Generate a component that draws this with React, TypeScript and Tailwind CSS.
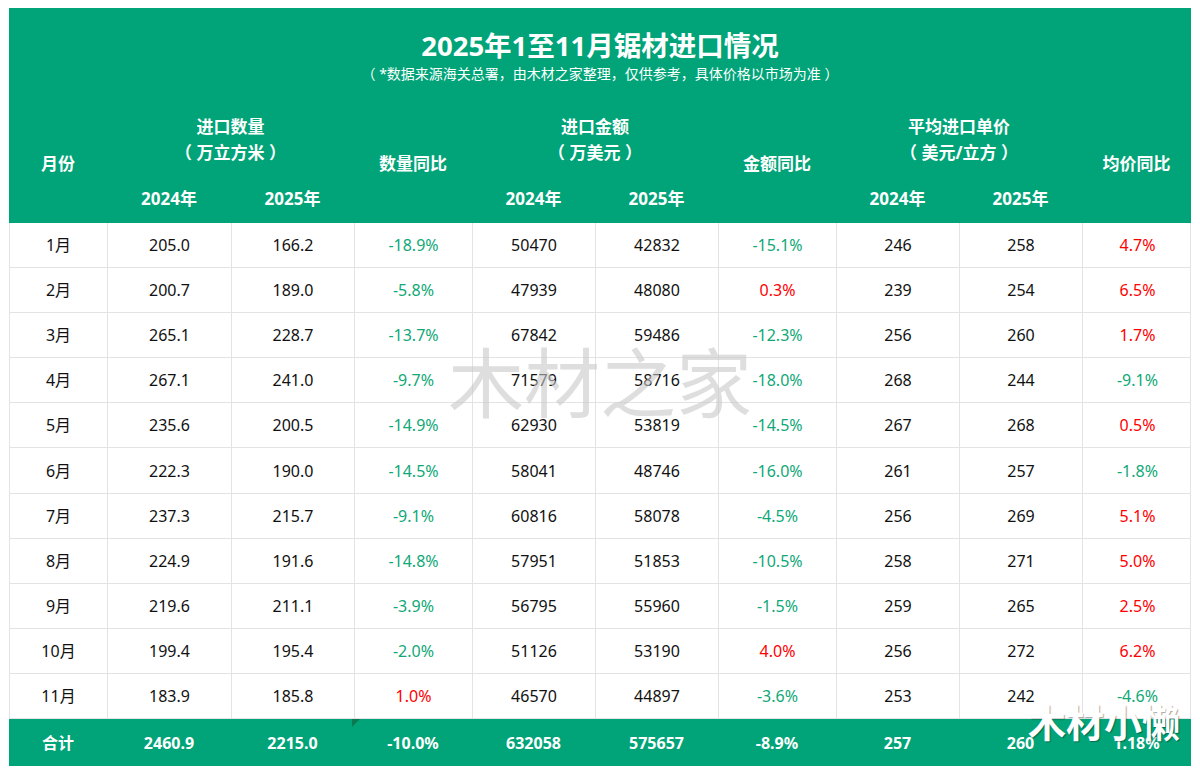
import React from 'react';

type Row = [string, string, string, string, string, string, string, string, string, string];

const rows: Row[] = [
  ['1月', '205.0', '166.2', '-18.9%', '50470', '42832', '-15.1%', '246', '258', '4.7%'],
  ['2月', '200.7', '189.0', '-5.8%', '47939', '48080', '0.3%', '239', '254', '6.5%'],
  ['3月', '265.1', '228.7', '-13.7%', '67842', '59486', '-12.3%', '256', '260', '1.7%'],
  ['4月', '267.1', '241.0', '-9.7%', '71579', '58716', '-18.0%', '268', '244', '-9.1%'],
  ['5月', '235.6', '200.5', '-14.9%', '62930', '53819', '-14.5%', '267', '268', '0.5%'],
  ['6月', '222.3', '190.0', '-14.5%', '58041', '48746', '-16.0%', '261', '257', '-1.8%'],
  ['7月', '237.3', '215.7', '-9.1%', '60816', '58078', '-4.5%', '256', '269', '5.1%'],
  ['8月', '224.9', '191.6', '-14.8%', '57951', '51853', '-10.5%', '258', '271', '5.0%'],
  ['9月', '219.6', '211.1', '-3.9%', '56795', '55960', '-1.5%', '259', '265', '2.5%'],
  ['10月', '199.4', '195.4', '-2.0%', '51126', '53190', '4.0%', '256', '272', '6.2%'],
  ['11月', '183.9', '185.8', '1.0%', '46570', '44897', '-3.6%', '253', '242', '-4.6%'],
];

const total: Row = ['合计', '2460.9', '2215.0', '-10.0%', '632058', '575657', '-8.9%', '257', '260', '1.18%'];

const cols = 'grid grid-cols-[98px_124px_123px_118px_123px_123px_118px_123px_123px_109px]';
const pctCols = [3, 6, 9];

const font = { fontFamily: '"Noto Sans", "Noto Sans CJK SC", sans-serif' };

function pctColor(v: string) {
  return v.startsWith('-') ? 'text-[#10a877]' : 'text-[#ff0000]';
}

const App: React.FC = () => {
  return (
    <div className="w-[1200px] h-[773px] bg-white" style={font}>
      <div className="relative ml-[9px] pt-[8px] w-[1182px]">
        {/* 表头 */}
        <div className="bg-[#00a478] text-white">
          <div className="pt-[25px] text-center">
            <div className="text-[27.5px] leading-[26px] font-bold">2025年1至11月锯材进口情况</div>
            <div className="mt-[6px] text-[14px] leading-[18px]">
              （ *数据来源海关总署，由木材之家整理，仅供参考，具体价格以市场为准 ）
            </div>
          </div>
          <div className={`${cols} grid-rows-[70px_48px] mt-[22px] text-[17px] font-bold`}>
            <div className="row-span-2 flex items-center justify-center">月份</div>
            <div className="col-span-2 flex flex-col items-center justify-center leading-[26px]">
              <span>进口数量</span>
              <span>（ 万立方米 ）</span>
            </div>
            <div className="row-span-2 flex items-center justify-center">数量同比</div>
            <div className="col-span-2 flex flex-col items-center justify-center leading-[26px]">
              <span>进口金额</span>
              <span>（ 万美元 ）</span>
            </div>
            <div className="row-span-2 flex items-center justify-center">金额同比</div>
            <div className="col-span-2 flex flex-col items-center justify-center leading-[26px]">
              <span>平均进口单价</span>
              <span>（ 美元/立方 ）</span>
            </div>
            <div className="row-span-2 flex items-center justify-center">均价同比</div>
            <div className="col-start-2 row-start-2 flex items-center justify-center">2024年</div>
            <div className="col-start-3 row-start-2 flex items-center justify-center">2025年</div>
            <div className="col-start-5 row-start-2 flex items-center justify-center">2024年</div>
            <div className="col-start-6 row-start-2 flex items-center justify-center">2025年</div>
            <div className="col-start-8 row-start-2 flex items-center justify-center">2024年</div>
            <div className="col-start-9 row-start-2 flex items-center justify-center">2025年</div>
          </div>
        </div>

        {/* 数据行 */}
        <div className="border-x border-[#e3e3e3]">
          {rows.map((r) => (
            <div key={r[0]} className={`${cols} h-[45.1px] border-b border-[#e3e3e3] text-[16px] text-[#111]`}>
              {r.map((v, i) => (
                <div
                  key={i}
                  className={`flex items-center justify-center ${i < 9 ? 'border-r border-[#e3e3e3]' : ''} ${
                    pctCols.includes(i) ? pctColor(v) : ''
                  }`}
                >
                  {v}
                </div>
              ))}
            </div>
          ))}
        </div>

        {/* 合计 */}
        <div className={`${cols} relative h-[47px] bg-[#00a478] text-white text-[16px] font-bold`}>
          {total.map((v, i) => (
            <div key={i} className="flex items-center justify-center">
              {v}
            </div>
          ))}
          <div className="absolute left-[343px] top-0 w-0 h-0 border-t-[8px] border-r-[8px] border-t-[#0b7a52] border-r-transparent" />
        </div>

        {/* 水印 */}
        <div className="absolute left-[439px] top-[338px] text-[76px] leading-[90px] text-[#c8c8c8]/60 pointer-events-none">
          木材之家
        </div>
        <div className="absolute left-[1019px] top-[699px] text-[38px] leading-[46px] font-bold text-white pointer-events-none [text-shadow:1px_1px_1px_rgba(0,0,0,0.35)]">
          木材小懒
        </div>
      </div>
    </div>
  );
};

export default App;
